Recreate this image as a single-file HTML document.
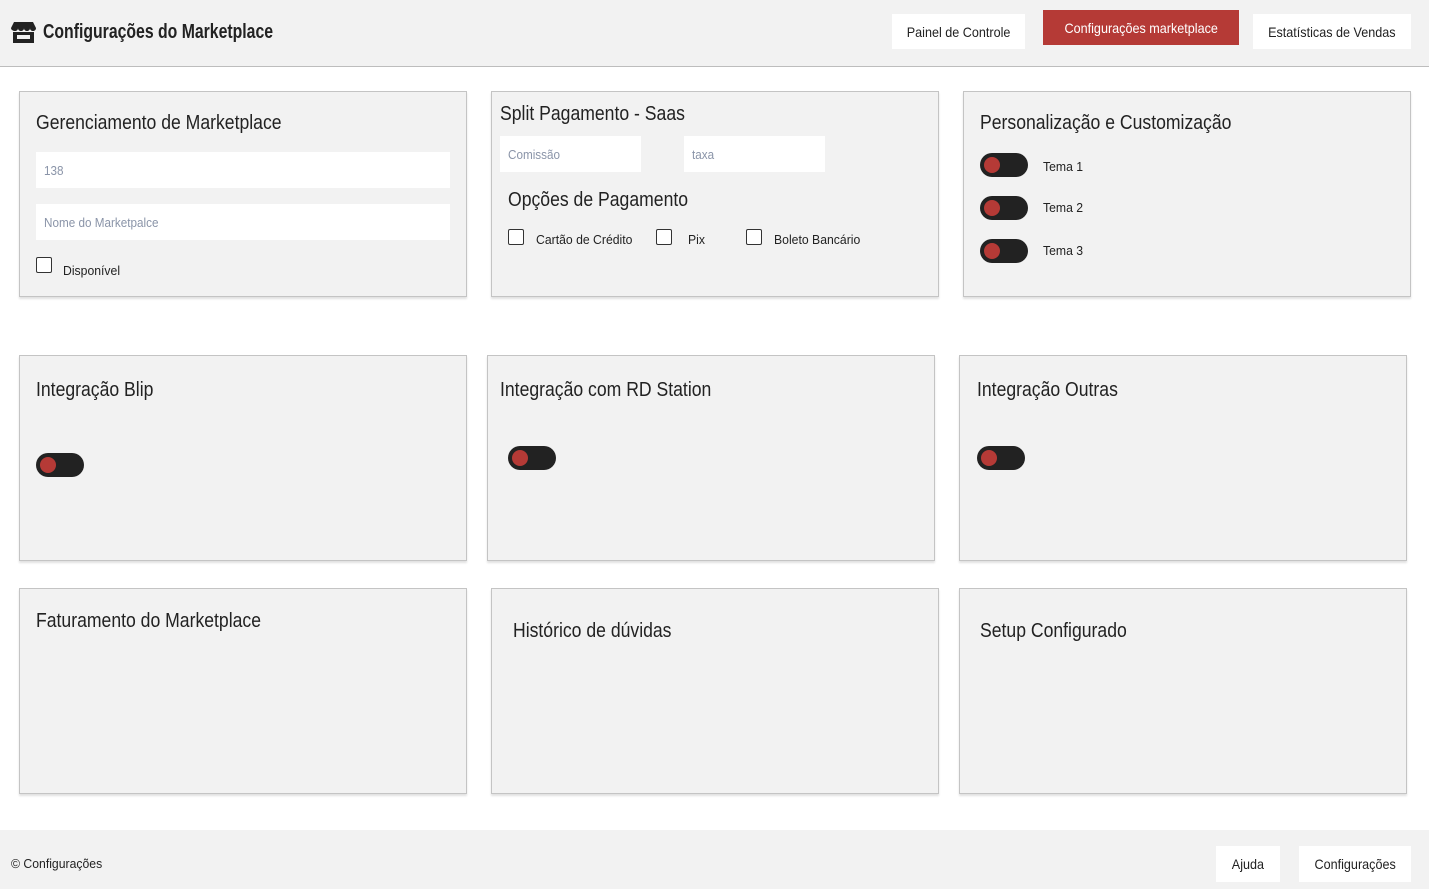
<!DOCTYPE html>
<html><head><meta charset="utf-8"><style>
*{box-sizing:border-box;margin:0;padding:0}
body{width:1429px;height:889px;background:#fff;font-family:"Liberation Sans",sans-serif;color:#222;position:relative;overflow:hidden}
.hdr{position:absolute;left:0;top:0;width:1429px;height:67px;background:#f2f2f2;border-bottom:1px solid #bdbdbd}
.title{position:absolute;left:43px;top:21px;font-size:20px;font-weight:bold;color:#222;transform:scaleX(.79);transform-origin:left;white-space:nowrap}
.btn{position:absolute;background:#fff;font-size:14px;display:flex;align-items:center;justify-content:center;color:#222;white-space:nowrap}
.btn span,.inp span{display:inline-block;transform:scaleX(.9)}
.inp span{transform-origin:left}
.card{position:absolute;background:#f2f2f2;border:1px solid #c4c4c4;box-shadow:0 2px 2px rgba(0,0,0,.12);width:448px;height:206px}
.h{position:absolute;font-size:20px;color:#222;transform:scaleX(.88);transform-origin:left;white-space:nowrap}
.inp{position:absolute;background:#fff;font-size:13px;color:#8a94a8;padding-left:8px;display:flex;align-items:center}
.cb{position:absolute;width:16px;height:16px;border:1.5px solid #333;border-radius:2px;background:#fff}
.lbl{position:absolute;font-size:13px;color:#222;transform:scaleX(.94);transform-origin:left;white-space:nowrap}
.tg{position:absolute;width:48px;height:24px;border-radius:12px;background:#222}
.tg::after{content:"";position:absolute;left:4px;top:4px;width:16px;height:16px;border-radius:50%;background:#b53a36}
.ftr{position:absolute;left:0;top:830px;width:1429px;height:59px;background:#f2f2f2}
</style></head><body>
<div class="hdr">
<svg style="position:absolute;left:11px;top:22px" width="25" height="21" viewBox="0 0 25 21"><path d="M3 0h19l3 6c0 2-1.5 3-3 3s-3-1-3-3c0 2-1.5 3-3 3s-3-1-3-3c0 2-1.5 3-3 3s-3-1-3-3c0 2-1.5 3-3 3S0 8 0 6z" fill="#222"/><path d="M2 10h21v11H2z" fill="#222"/><rect x="6" y="13" width="13" height="4" fill="#f2f2f2"/></svg>
<div class="title">Configurações do Marketplace</div>
<div class="btn" style="left:892px;top:14px;width:133px;height:35px"><span>Painel de Controle</span></div>
<div class="btn" style="left:1043px;top:10px;width:196px;height:35px;background:#b53a36;color:#fff"><span>Configurações marketplace</span></div>
<div class="btn" style="left:1253px;top:14px;width:158px;height:35px"><span>Estatísticas de Vendas</span></div>
</div>

<div class="card" style="left:19px;top:91px">
<div class="h" style="left:16px;top:20px">Gerenciamento de Marketplace</div>
<div class="inp" style="left:16px;top:60px;width:414px;height:36px"><span>138</span></div>
<div class="inp" style="left:16px;top:112px;width:414px;height:36px"><span>Nome do Marketpalce</span></div>
<div class="cb" style="left:16px;top:165px"></div>
<div class="lbl" style="left:43px;top:171px">Disponível</div>
</div>

<div class="card" style="left:491px;top:91px">
<div class="h" style="left:8px;top:11px">Split Pagamento - Saas</div>
<div class="inp" style="left:8px;top:44px;width:141px;height:36px"><span>Comissão</span></div>
<div class="inp" style="left:192px;top:44px;width:141px;height:36px"><span>taxa</span></div>
<div class="h" style="left:16px;top:97px">Opções de Pagamento</div>
<div class="cb" style="left:16px;top:137px"></div><div class="lbl" style="left:44px;top:140px">Cartão de Crédito</div>
<div class="cb" style="left:164px;top:137px"></div><div class="lbl" style="left:196px;top:140px">Pix</div>
<div class="cb" style="left:254px;top:137px"></div><div class="lbl" style="left:282px;top:140px">Boleto Bancário</div>
</div>

<div class="card" style="left:963px;top:91px">
<div class="h" style="left:16px;top:20px">Personalização e Customização</div>
<div class="tg" style="left:16px;top:61px"></div><div class="lbl" style="left:79px;top:67px">Tema 1</div>
<div class="tg" style="left:16px;top:104px"></div><div class="lbl" style="left:79px;top:108px">Tema 2</div>
<div class="tg" style="left:16px;top:147px"></div><div class="lbl" style="left:79px;top:151px">Tema 3</div>
</div>

<div class="card" style="left:19px;top:355px"><div class="h" style="left:16px;top:23px">Integração Blip</div><div class="tg" style="left:16px;top:97px"></div></div>
<div class="card" style="left:487px;top:355px"><div class="h" style="left:12px;top:23px">Integração com RD Station</div><div class="tg" style="left:20px;top:90px"></div></div>
<div class="card" style="left:959px;top:355px"><div class="h" style="left:17px;top:23px">Integração Outras</div><div class="tg" style="left:17px;top:90px"></div></div>

<div class="card" style="left:19px;top:588px"><div class="h" style="left:16px;top:21px">Faturamento do Marketplace</div></div>
<div class="card" style="left:491px;top:588px"><div class="h" style="left:21px;top:31px">Histórico de dúvidas</div></div>
<div class="card" style="left:959px;top:588px"><div class="h" style="left:20px;top:31px">Setup Configurado</div></div>

<div class="ftr">
<div class="lbl" style="left:11px;top:26px">© Configurações</div>
<div class="btn" style="left:1216px;top:16px;width:64px;height:36px"><span>Ajuda</span></div>
<div class="btn" style="left:1299px;top:16px;width:112px;height:36px"><span>Configurações</span></div>
</div>
</body></html>
